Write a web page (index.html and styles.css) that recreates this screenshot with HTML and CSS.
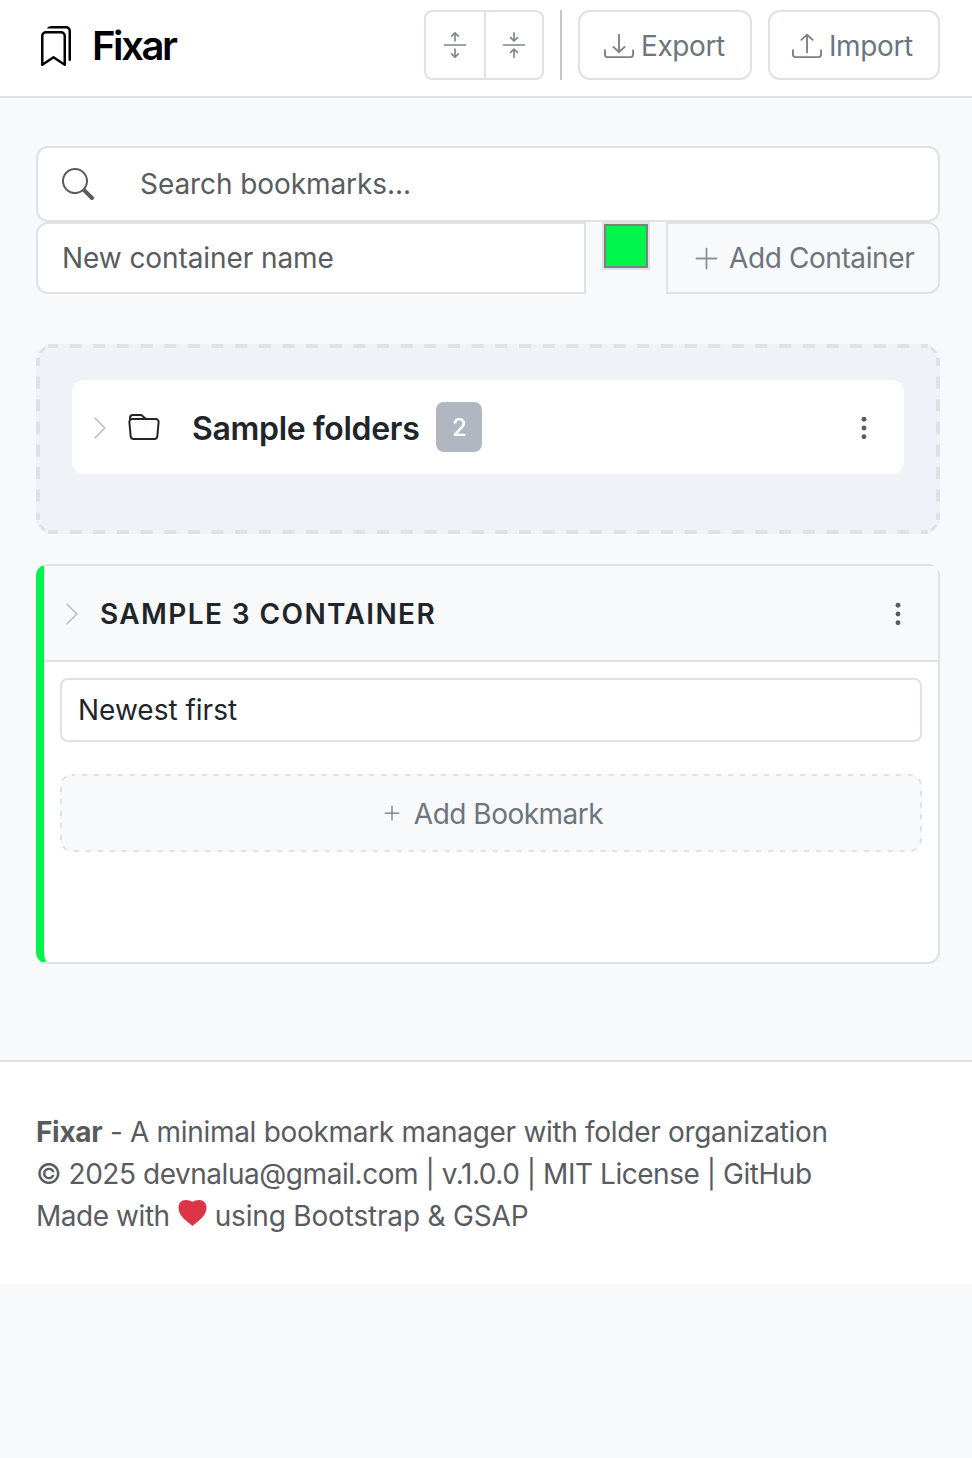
FILE: index.html
```html
<!DOCTYPE html>
<html lang="en">
<head>
<meta charset="utf-8">
<title>Fixar</title>
<link rel="stylesheet" href="styles.css">
</head>
<body>
<header class="navbar">
  <div class="brand">
    <svg class="icon icon-brand" viewBox="0 0 16 16"><path d="M2 4a2 2 0 0 1 2-2h6a2 2 0 0 1 2 2v11.5a.5.5 0 0 1-.777.416L7 13.101l-4.223 2.815A.5.5 0 0 1 2 15.5zm2-1a1 1 0 0 0-1 1v10.566l3.723-2.482a.5.5 0 0 1 .554 0L11 14.566V4a1 1 0 0 0-1-1z"/><path d="M4.268 1H12a1 1 0 0 1 1 1v11.768l.223.148A.5.5 0 0 0 14 13.5V2a2 2 0 0 0-2-2H6a2 2 0 0 0-1.732 1"/></svg>
    <span class="brand-name">Fixar</span>
  </div>
  <div class="actions">
    <div class="btn-group">
      <button class="group-btn" aria-label="Expand all"><svg class="icon icon-small" viewBox="0 0 16 16"><path d="M1 8a.5.5 0 0 1 .5-.5h13a.5.5 0 0 1 0 1h-13A.5.5 0 0 1 1 8M7.646.146a.5.5 0 0 1 .708 0l2 2a.5.5 0 0 1-.708.708L8.5 1.707V5.5a.5.5 0 0 1-1 0V1.707L6.354 2.854a.5.5 0 1 1-.708-.708zM8 10a.5.5 0 0 1 .5.5v3.793l1.146-1.147a.5.5 0 0 1 .708.708l-2 2a.5.5 0 0 1-.708 0l-2-2a.5.5 0 0 1 .708-.708L7.5 14.293V10.5A.5.5 0 0 1 8 10"/></svg></button>
      <button class="group-btn" aria-label="Collapse all"><svg class="icon icon-small" viewBox="0 0 16 16"><path d="M1 8a.5.5 0 0 1 .5-.5h13a.5.5 0 0 1 0 1h-13A.5.5 0 0 1 1 8m7-8a.5.5 0 0 1 .5.5v3.793l1.146-1.147a.5.5 0 0 1 .708.708l-2 2a.5.5 0 0 1-.708 0l-2-2a.5.5 0 1 1 .708-.708L7.5 4.293V.5A.5.5 0 0 1 8 0m-.5 11.707-1.146 1.147a.5.5 0 0 1-.708-.708l2-2a.5.5 0 0 1 .708 0l2 2a.5.5 0 0 1-.708.708L8.5 11.707V15.5a.5.5 0 0 1-1 0z"/></svg></button>
    </div>
    <div class="divider"></div>
    <button class="btn btn-export"><svg class="icon icon-btn" viewBox="0 0 16 16" preserveAspectRatio="none"><path d="M.5 9.9a.5.5 0 0 1 .5.5v2.5a1 1 0 0 0 1 1h12a1 1 0 0 0 1-1v-2.5a.5.5 0 0 1 1 0v2.5a2 2 0 0 1-2 2H2a2 2 0 0 1-2-2v-2.5a.5.5 0 0 1 .5-.5"/><path d="M7.646 11.854a.5.5 0 0 0 .708 0l3-3a.5.5 0 0 0-.708-.708L8.5 10.293V1.5a.5.5 0 0 0-1 0v8.793L5.354 8.146a.5.5 0 1 0-.708.708z"/></svg><span>Export</span></button>
    <button class="btn btn-import"><svg class="icon icon-btn" viewBox="0 0 16 16" preserveAspectRatio="none"><path d="M.5 9.9a.5.5 0 0 1 .5.5v2.5a1 1 0 0 0 1 1h12a1 1 0 0 0 1-1v-2.5a.5.5 0 0 1 1 0v2.5a2 2 0 0 1-2 2H2a2 2 0 0 1-2-2v-2.5a.5.5 0 0 1 .5-.5"/><path d="M7.646 1.146a.5.5 0 0 1 .708 0l3 3a.5.5 0 0 1-.708.708L8.5 2.707V11.5a.5.5 0 0 1-1 0V2.707L5.354 4.854a.5.5 0 1 1-.708-.708z"/></svg><span>Import</span></button>
  </div>
</header>

<main class="main">
  <div class="search">
    <svg class="icon icon-search" viewBox="0 0 16 16"><path d="M11.742 10.344a6.5 6.5 0 1 0-1.397 1.398h-.001q.044.06.098.115l3.85 3.85a1 1 0 0 0 1.415-1.414l-3.85-3.85a1 1 0 0 0-.115-.1zM12 6.5a5.5 5.5 0 1 1-11 0 5.5 5.5 0 0 1 11 0"/></svg>
    <span>Search bookmarks...</span>
  </div>
  <div class="create-row">
    <div class="name-field"><span>New container name</span></div>
    <div class="swatch"></div>
    <button class="add-container"><svg class="icon icon-plus" viewBox="0 0 16 16"><path d="M8 2a.5.5 0 0 1 .5.5v5h5a.5.5 0 0 1 0 1h-5v5a.5.5 0 0 1-1 0v-5h-5a.5.5 0 0 1 0-1h5v-5A.5.5 0 0 1 8 2"/></svg><span>Add Container</span></button>
  </div>

  <section class="folders">
    <svg class="outline" viewBox="0 0 904 190"><path class="dash-h" d="M12 2H892M12 188H892"/><path class="dash-v" d="M2 14V176M902 14V176"/><path class="corner" d="M4 9Q6 6 9 4M895 4Q898 6 900 9M4 181Q6 184 9 186M895 186Q898 184 900 181"/></svg>
    <div class="folder">
      <svg class="icon icon-chevron" viewBox="0 0 16 16"><path d="M4.646 1.646a.5.5 0 0 1 .708 0l6 6a.5.5 0 0 1 0 .708l-6 6a.5.5 0 0 1-.708-.708L10.293 8 4.646 2.354a.5.5 0 0 1 0-.708"/></svg>
      <svg class="icon icon-folder" viewBox="0 0 16 16"><path d="M.54 3.87.5 3a2 2 0 0 1 2-2h3.672a2 2 0 0 1 1.414.586l.828.828A2 2 0 0 0 9.828 3h3.982a2 2 0 0 1 1.992 2.181l-.637 7A2 2 0 0 1 13.174 14H2.826a2 2 0 0 1-1.991-1.819l-.637-7a2 2 0 0 1 .342-1.31zM2.19 4a1 1 0 0 0-.996 1.09l.637 7a1 1 0 0 0 .995.91h10.348a1 1 0 0 0 .995-.91l.637-7A1 1 0 0 0 13.81 4zm4.69-1.707A1 1 0 0 0 6.172 2H2.5a1 1 0 0 0-1 .981l.006.139q.323-.119.684-.12h5.396z"/></svg>
      <span class="folder-name">Sample folders</span>
      <span class="count">2</span>
      <svg class="icon icon-dots" viewBox="0 0 16 16"><circle cx="8" cy="3" r="1.4"/><circle cx="8" cy="8" r="1.4"/><circle cx="8" cy="13" r="1.4"/></svg>
    </div>
  </section>

  <section class="container">
    <div class="container-head">
      <svg class="icon icon-chevron" viewBox="0 0 16 16"><path d="M4.646 1.646a.5.5 0 0 1 .708 0l6 6a.5.5 0 0 1 0 .708l-6 6a.5.5 0 0 1-.708-.708L10.293 8 4.646 2.354a.5.5 0 0 1 0-.708"/></svg>
      <span class="container-name">SAMPLE 3 CONTAINER</span>
      <svg class="icon icon-dots" viewBox="0 0 16 16"><circle cx="8" cy="3" r="1.4"/><circle cx="8" cy="8" r="1.4"/><circle cx="8" cy="13" r="1.4"/></svg>
    </div>
    <div class="container-body">
      <div class="sort"><span>Newest first</span></div>
      <button class="add-bookmark">
        <svg class="outline" viewBox="0 0 862 78"><rect class="dash-thin" x="1" y="1" width="860" height="76" rx="11"/></svg>
        <svg class="icon icon-plus-small" viewBox="0 0 16 16"><path d="M8 2a.5.5 0 0 1 .5.5v5h5a.5.5 0 0 1 0 1h-5v5a.5.5 0 0 1-1 0v-5h-5a.5.5 0 0 1 0-1h5v-5A.5.5 0 0 1 8 2"/></svg>
        <span>Add Bookmark</span>
      </button>
    </div>
  </section>
</main>

<footer class="footer">
  <div class="line line-about"><b>Fixar</b> - A minimal bookmark manager with folder organization</div>
  <div class="line line-legal">© 2025 devnalua@gmail.com | v.1.0.0 | MIT License | GitHub</div>
  <div class="line line-made"><span class="made-with">Made with</span><svg class="icon icon-heart" viewBox="0 0 16 16"><path d="M4 .5C1.800.5 0 2.200 0 5C0 9.600 4.500 12.500 8 15.400C11.500 12.500 16 9.600 16 5C16 2.200 14.200.5 12 .5C10.300.5 8.800.9 8 1.700C7.200.9 5.700.5 4 .5Z"/></svg><span>using Bootstrap &amp; GSAP</span></div>
</footer>
</body>
</html>
```
FILE: styles.css
```css
* { box-sizing: border-box; }

body {
  margin: 0;
  background: #f8f9fb;
  color: #212529;
  font: 400 28px/42px Inter, sans-serif;
}

button { font: inherit; margin: 0; padding: 0; }
span, .line { white-space: nowrap; }
.icon { display: block; flex: none; fill: currentColor; }

.navbar {
  display: flex;
  justify-content: space-between;
  height: 98px;
  padding: 10px 32px 0 36px;
  background: #fff;
  border-bottom: 2px solid #dee2e6;
}
.brand { display: flex; align-items: center; gap: 16px; height: 70px; color: #000; }
.icon-brand { width: 40px; height: 40px; margin-top: 2px; }
.brand-name { margin-top: 2px; font-size: 40px; font-weight: 600; letter-spacing: -2.4px; }

.actions { display: flex; gap: 16px; height: 70px; color: #6c757d; }
.btn-group { display: flex; width: 120px; border: 2px solid #dee2e6; border-radius: 8px; }
.group-btn {
  display: flex;
  flex: none;
  width: 58px;
  align-items: center;
  justify-content: center;
  border: 0;
  background: none;
  color: #7f8488;
}
.group-btn + .group-btn { border-left: 2px solid #dee2e6; }
.icon-small { width: 26px; height: 26px; }
.divider { width: 2px; background: #c4c6c8; }
.btn {
  display: flex;
  align-items: center;
  gap: 7px;
  padding-left: 24px;
  border: 2px solid #dee2e6;
  border-radius: 12px;
  background: #fff;
  color: #6c757d;
  letter-spacing: -0.4px;
}
.btn span { margin-top: 2px; }
.btn-export { width: 174px; }
.btn-import { width: 172px; padding-left: 22px; }
.icon-btn { width: 30px; height: 28px; margin-top: 1px; color: #7c8186; }

.main { padding: 48px 32px 96px 36px; }
.search {
  display: flex;
  align-items: center;
  gap: 46px;
  height: 76px;
  padding-left: 24px;
  border: 2px solid #dee2e6;
  border-radius: 12px;
  background: #fff;
  color: #595c5f;
  letter-spacing: -0.08px;
}
.icon-search { width: 32px; height: 32px; }
.create-row { display: flex; align-items: flex-start; gap: 16px; height: 72px; }
.name-field {
  display: flex;
  align-items: center;
  width: 550px;
  height: 72px;
  padding-left: 24px;
  border: 2px solid #dee2e6;
  border-radius: 12px 0 0 12px;
  background: #fff;
  color: #595c5f;
  letter-spacing: -0.08px;
}
.swatch {
  width: 48px;
  height: 48px;
  border: 2px solid #dee2e6;
  background: #00f54a;
  box-shadow: inset 0 0 0 2px #808080;
}
.add-container {
  display: flex;
  align-items: center;
  gap: 8px;
  width: 274px;
  height: 72px;
  padding-left: 24px;
  border: 2px solid #dee2e6;
  border-radius: 0 12px 12px 0;
  background: #f8f9fb;
  color: #6c757d;
  letter-spacing: -0.4px;
}
.icon-plus { width: 29px; height: 29px; color: #8b9197; }

.outline { position: absolute; inset: 0; width: 100%; height: 100%; fill: none; stroke: #dee2e6; }
.folders {
  position: relative;
  height: 190px;
  margin-top: 50px;
  padding: 36px;
  border-radius: 16px;
  background: #eff3f8;
}
.dash-h { stroke-width: 4; stroke-dasharray: 12 11.65; stroke-dashoffset: 2; }
.dash-v { stroke-width: 4; stroke-dasharray: 12 10.6; stroke-dashoffset: 4; }
.corner { stroke-width: 3; }
.folder {
  display: flex;
  align-items: center;
  height: 94px;
  padding: 0 26px 0 15px;
  border-radius: 12px;
  background: #fff;
}
.icon-chevron { width: 26px; height: 26px; margin-top: 2px; color: #b9bec5; }
.icon-folder { width: 32px; height: 32px; margin: 2px 0 0 15px; }
.folder-name { margin: 4px 0 0 32px; font-size: 32px; font-weight: 600; letter-spacing: -0.33px; }
.count {
  width: 46px;
  height: 50px;
  margin-left: 17px;
  border-radius: 8px;
  background: #b0b7c0;
  color: #fff;
  font-size: 24px;
  font-weight: 500;
  line-height: 51px;
  text-align: center;
}
.icon-dots { width: 28px; height: 28px; margin: 2px 0 0 auto; color: #595c5f; }

.container {
  height: 400px;
  margin-top: 30px;
  border: 2px solid #dee2e6;
  border-left: 8px solid #00f54a;
  border-radius: 12px;
  background: #fff;
}
.container-head {
  display: flex;
  align-items: center;
  height: 96px;
  padding: 0 26px 0 15px;
  border-bottom: 2px solid #dee2e6;
  background: #f8f9fb;
}
.container-name { margin: 1px 0 0 15px; font-weight: 600; letter-spacing: 1.4px; }
.container-body { padding: 16px; }
.sort {
  display: flex;
  align-items: center;
  height: 64px;
  padding-left: 16px;
  border: 2px solid #dee2e6;
  border-radius: 8px;
}
.add-bookmark {
  position: relative;
  display: flex;
  align-items: center;
  justify-content: center;
  gap: 12px;
  width: 100%;
  height: 78px;
  margin-top: 32px;
  border: 0;
  border-radius: 12px;
  background: #f8f9fb;
  color: #6c757d;
  letter-spacing: -0.5px;
}
.add-bookmark span { margin-top: 2px; }
.dash-thin { stroke-width: 2; stroke-dasharray: 5 6.97; stroke-dashoffset: 2; }
.icon-plus-small { width: 20px; height: 20px; margin-left: 3px; }

.footer {
  height: 224px;
  padding: 49px 36px 0;
  border-top: 2px solid #dee2e6;
  background: #fff;
  color: #595c5f;
}
.line-about { letter-spacing: -0.31px; }
.line-legal { letter-spacing: -0.46px; }
.line-made { display: flex; gap: 8px; letter-spacing: -0.18px; }
.made-with { letter-spacing: -0.45px; }
.icon-heart { width: 29px; height: 28px; margin-top: 4px; color: #dc3545; }
```
